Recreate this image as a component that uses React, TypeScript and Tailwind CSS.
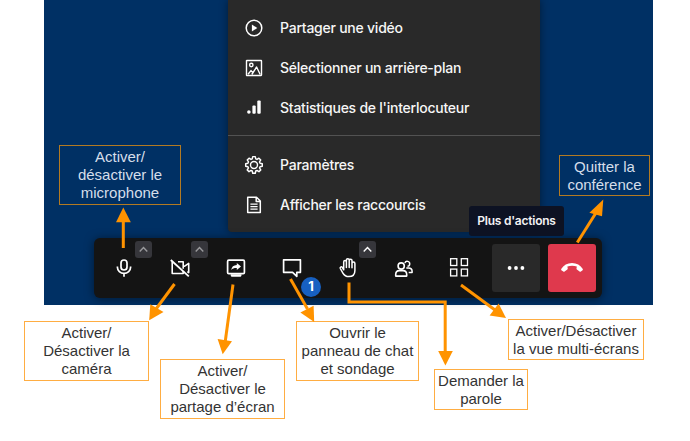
import type { ReactNode } from "react";
import clsx from "clsx";

function Icon({ children, className }: { children: ReactNode; className?: string }) {
  return (
    <svg
      viewBox="0 0 24 24"
      fill="none"
      stroke="currentColor"
      strokeWidth="1.7"
      strokeLinejoin="round"
      className={clsx("size-6 shrink-0", className)}
    >
      {children}
    </svg>
  );
}

const PlayIcon = () => (
  <Icon>
    <circle cx="12" cy="12" r="7.8" strokeWidth="1.5" />
    <path d="M9.9 8.4v7.2l5.4-3.6z" fill="currentColor" stroke="none" />
  </Icon>
);

const PictureIcon = () => (
  <Icon>
    <rect x="4.5" y="4.5" width="15" height="15" rx="0.4" strokeWidth="1.4" />
    <circle cx="9.3" cy="9" r="1.7" strokeWidth="1.4" />
    <path d="M6 18.3l3-3.7 2 2.2M9.8 18.5l4.8-7.5 3.6 7.5" strokeWidth="1.4" />
  </Icon>
);

const StatsIcon = () => (
  <Icon>
    <g fill="currentColor" stroke="none">
      <circle cx="6.9" cy="16" r="1.8" />
      <rect x="10.4" y="9.6" width="3.3" height="8.2" rx="1" />
      <rect x="15.3" y="4.6" width="3.4" height="13.2" rx="1" />
    </g>
  </Icon>
);

const GearIcon = () => (
  <Icon>
    <circle cx="12" cy="12" r="3.5" strokeWidth="1.4" />
    <path
      d="M10.7 3.8h2.6l.5 2.3 1.3.55 2-1.25 1.85 1.85-1.25 2 .55 1.3 2.3.5v2.6l-2.3.5-.55 1.3 1.25 2-1.85 1.85-2-1.25-1.3.55-.5 2.3h-2.6l-.5-2.3-1.3-.55-2 1.25-1.85-1.85 1.25-2-.55-1.3-2.3-.5v-2.6l2.3-.5.55-1.3-1.25-2 1.85-1.85 2 1.25 1.3-.55z"
      transform="translate(0.35 -0.05) scale(0.97)"
      strokeWidth="1.5"
    />
  </Icon>
);

const DocumentIcon = () => (
  <Icon>
    <path d="M5.7 4.2h8.8l3.8 3.8v11.6H5.7z M14.2 4.4v4h4" strokeWidth="1.5" />
    <path d="M8.4 11.1h7.2M8.4 13.6h7.2M8.4 16.2h7.2" strokeWidth="1.3" />
  </Icon>
);

const MicIcon = () => (
  <Icon>
    <rect x="9" y="4" width="6" height="10" rx="3" />
    <path d="M5.4 10.6v.7a6.6 6 0 0 0 13.2 0v-.7M12 17.3v3.5" />
  </Icon>
);

const CameraOffIcon = () => (
  <Icon>
    <path d="M10 5.8h5.2v3.8l1.5.6 4-2.8v9.2l-1.4-1M15.2 9.6v3.2M4.2 5.8v11.7h11V15" strokeWidth="1.6" />
    <path d="M2.8 4l18 16.4" strokeWidth="1.8" />
  </Icon>
);

const ShareIcon = () => (
  <Icon>
    <rect x="3.6" y="4.2" width="16.8" height="13.4" rx="1.2" />
    <path d="M7 18.4h10.2v1.2q0 .9-.9.9H7.9q-.9 0-.9-.9z" fill="currentColor" strokeWidth="0.5" />
    <path d="M7.2 14c.4-3.3 2.4-5 5.6-5.1V7l4.2 3.5-4.2 3.4V12c-2.5-.1-4.2.5-5.6 2z" fill="currentColor" stroke="none" />
  </Icon>
);

const ChatIcon = () => (
  <Icon>
    <path d="M3.6 3.8h16.8v12.5h-3.6v4l-4.2-4h-9z" />
  </Icon>
);

const HandIcon = () => (
  <Icon>
    <path
      d="M7.7 13.8V5.9a1.35 1.35 0 0 1 2.7 0v5.6V4.1a1.4 1.4 0 0 1 2.8 0v7.4V4.6a1.4 1.4 0 0 1 2.8 0v7.2V7.4a1.45 1.45 0 0 1 2.9 0v7.1c0 4-2.3 6.1-6 6.1-3 0-4.6-1.1-6-3.5l-2.6-4.6c-.6-1.3.9-2.2 2-1.2z"
      strokeWidth="1.5"
    />
  </Icon>
);

const PeopleIcon = () => (
  <Icon>
    <circle cx="9.2" cy="10" r="3.1" strokeWidth="1.6" />
    <path d="M3.7 20.1v-1.6c0-2.3 1.5-3.9 3.7-3.9h3.6c2.2 0 3.7 1.6 3.7 3.9v1.6z" strokeWidth="1.6" />
    <path d="M12.9 6.9a2.5 2.5 0 1 1 2.6 3.4M14.3 11.9h2.2c2.1 0 3.6 1.3 3.6 3.4v1.3h-3.4" strokeWidth="1.5" />
  </Icon>
);

const GridIcon = () => (
  <Icon>
    <g strokeWidth="1.3" strokeLinejoin="miter">
      <rect x="2.6" y="2.7" width="6.2" height="6.8" />
      <rect x="13.3" y="2.7" width="6.2" height="6.8" />
      <rect x="2.6" y="13.1" width="6.2" height="6.8" />
      <rect x="13.3" y="13.1" width="6.2" height="6.8" />
    </g>
  </Icon>
);

const DotsIcon = () => (
  <Icon>
    <g fill="currentColor" stroke="none">
      <circle cx="5.6" cy="12" r="1.9" />
      <circle cx="12" cy="12" r="1.9" />
      <circle cx="18.4" cy="12" r="1.9" />
    </g>
  </Icon>
);

const HangUpIcon = () => (
  <Icon>
    <path
      d="M1.2 13.1C3.6 9.2 7.3 7 12 7s8.4 2.2 10.8 6.1c.2.4.1.8-.2 1.1l-1.7 1.3c-.4.3-.9.3-1.3 0l-2.7-1.9c-.4-.3-.5-.7-.4-1.1l.3-1.9c-2.9-1-6.5-1-9.4 0l.3 1.9c.1.4 0 .8-.4 1.1l-2.7 1.9c-.4.3-.9.3-1.3 0l-1.9-1.3c-.3-.3-.4-.7-.2-1.1z"
      fill="currentColor"
      stroke="none"
    />
  </Icon>
);

function MenuRow({ icon, label }: { icon: ReactNode; label: string }) {
  return (
    <div className="flex h-10 items-center gap-[14px] pl-[14px]">
      {icon}
      <span className="text-sm font-medium tracking-[-0.24px] whitespace-nowrap text-[#f6f6f6]">{label}</span>
    </div>
  );
}

function ToolButton({
  children,
  chevron,
  badge,
  className,
}: {
  children: ReactNode;
  chevron?: string;
  badge?: string;
  className?: string;
}) {
  return (
    <div className={clsx("relative flex size-12 items-center justify-center rounded-[3px] text-white", className)}>
      {children}
      {chevron && (
        <span className="absolute -top-[3px] left-[35px] flex size-[17px] items-center justify-center rounded-[3px] bg-[#36363b]">
          <svg viewBox="0 0 17 17" className={clsx("size-[17px]", chevron)} fill="none" stroke="currentColor" strokeWidth="1.4">
            <path d="M4.7 10.5l3.8-4 3.8 4" />
          </svg>
        </span>
      )}
      {badge && (
        <span className="absolute top-[33px] left-[33px] flex size-5 items-center justify-center rounded-full bg-[#1760c1] text-[13px] font-bold">
          {badge}
        </span>
      )}
    </div>
  );
}

function Callout({ lines, place, dark }: { lines: string[]; place: string; dark?: boolean }) {
  return (
    <div
      className={clsx(
        "absolute flex flex-col items-center justify-center border font-['Liberation_Sans',Arial,sans-serif] text-[15px] leading-[17.7px] whitespace-nowrap",
        dark ? "border-[#b37a22] text-[#d5deea]" : "border-[#ffad42] bg-white text-[#333333]",
        place,
      )}
    >
      {lines.map((line) => (
        <span key={line}>{line}</span>
      ))}
    </div>
  );
}

const arrows = [
  { shaft: "M123.3 248V220", head: "123.3,207.5 116,222.3 130.8,222.3" },
  { shaft: "M174.5 284L156 309", head: "149.2,320.2 150.3,304.2 163.5,312" },
  { shaft: "M233 284.5L225.3 341", head: "222.7,354.3 217.6,339 232,341.2" },
  { shaft: "M290.5 279L307.5 309", head: "314.2,322 300.4,312.5 313.6,305.7" },
  { shaft: "M349 282.5V302H445.2V352", head: "445.4,365.5 438.2,351 452.8,351" },
  { shaft: "M461 285L495 310", head: "506,318 489.6,315.6 498.6,303.4" },
  { shaft: "M577.3 242.5L596.5 212", head: "603.3,199.5 589.4,212.7 602,216.3" },
];

export default function App() {
  return (
    <div className="relative h-[441px] w-[690px] overflow-hidden bg-white font-[Inter,'Noto_Sans',sans-serif]">
      <section className="ml-[44px] flex h-[305px] w-[609px] flex-col bg-[#003064]">
        <div className="ml-[184px] h-[232px] w-[312px] rounded-b-[4px] bg-[#292929] pt-2 text-white shadow-[0_0_8px_rgba(0,0,0,0.45)]">
          <MenuRow icon={<PlayIcon />} label="Partager une vidéo" />
          <MenuRow icon={<PictureIcon />} label="Sélectionner un arrière-plan" />
          <MenuRow icon={<StatsIcon />} label="Statistiques de l'interlocuteur" />
          <div className="mt-[7px] mb-[9px] h-px bg-[#525252]" />
          <MenuRow icon={<GearIcon />} label="Paramètres" />
          <MenuRow icon={<DocumentIcon />} label="Afficher les raccourcis" />
        </div>
        <div className="mt-[6px] ml-[50px] flex h-[60px] w-[508px] gap-2 rounded-[6px] bg-[#141414] p-[6px] shadow-[0_1px_10px_rgba(0,0,0,0.5)]">
          <ToolButton chevron="text-[#9a9a9d]"><MicIcon /></ToolButton>
          <ToolButton chevron="text-[#9a9a9d]"><CameraOffIcon /></ToolButton>
          <ToolButton><ShareIcon /></ToolButton>
          <ToolButton badge="1"><ChatIcon /></ToolButton>
          <ToolButton chevron="text-white"><HandIcon /></ToolButton>
          <ToolButton><PeopleIcon /></ToolButton>
          <ToolButton><GridIcon /></ToolButton>
          <ToolButton className="bg-[#292929]"><DotsIcon /></ToolButton>
          <ToolButton className="bg-[#df394d]"><HangUpIcon /></ToolButton>
        </div>
      </section>

      <div className="absolute top-[206px] left-[469px] flex h-[30px] w-[95px] items-center justify-center rounded-[3px] bg-[#0d1223] text-xs font-semibold tracking-[-0.24px] whitespace-nowrap text-[#f3f3f5]">
        Plus d'actions
      </div>

      <Callout dark place="left-[59px] top-[145px] h-[60px] w-[122px]" lines={["Activer/", "désactiver le", "microphone"]} />
      <Callout dark place="left-[559px] top-[155px] h-[41px] w-[91px]" lines={["Quitter la", "conférence"]} />
      <Callout place="left-[24px] top-[321px] h-[60px] w-[125px]" lines={["Activer/", "Désactiver la", "caméra"]} />
      <Callout place="left-[160px] top-[359px] h-[60px] w-[125px]" lines={["Activer/", "Désactiver le", "partage d’écran"]} />
      <Callout place="left-[296px] top-[321px] h-[60px] w-[123px]" lines={["Ouvrir le", "panneau de chat", "et sondage"]} />
      <Callout place="left-[434px] top-[369px] h-[41px] w-[94px]" lines={["Demander la", "parole"]} />
      <Callout place="left-[508px] top-[319px] h-[41px] w-[136px]" lines={["Activer/Désactiver", "la vue multi-écrans"]} />

      <svg viewBox="0 0 690 441" className="pointer-events-none absolute inset-0 h-[441px] w-[690px]">
        {arrows.map((arrow) => (
          <g key={arrow.shaft}>
            <path d={arrow.shaft} fill="none" stroke="#ff9300" strokeWidth="3" />
            <polygon points={arrow.head} fill="#ff9300" />
          </g>
        ))}
      </svg>
    </div>
  );
}
